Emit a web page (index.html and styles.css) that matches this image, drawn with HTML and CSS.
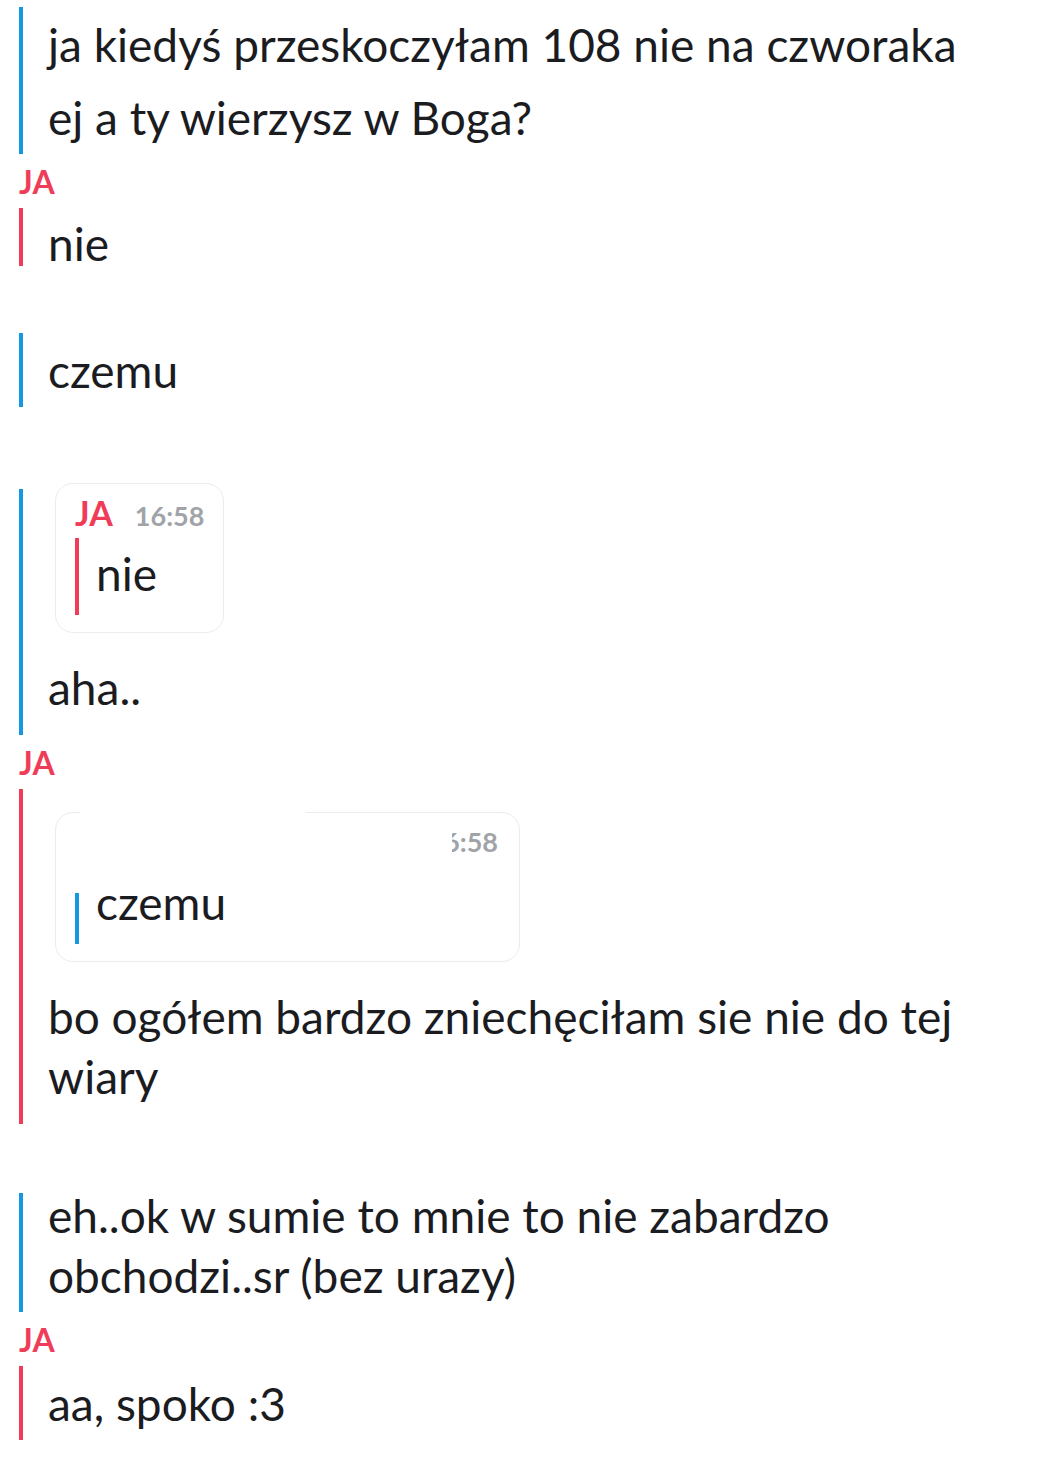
FILE: index.html
```html
<!DOCTYPE html>
<html lang="pl">
<head>
<meta charset="utf-8">
<title>Czat</title>
<link rel="stylesheet" href="styles.css">
</head>
<body>
<div class="chat">
  <div class="msg blue b1">
    <p class="t">ja kiedyś przeskoczyłam 108 nie na czworaka</p>
    <p class="t">ej a ty wierzysz w Boga?</p>
  </div>
  <div class="name">JA</div>
  <div class="msg red b2"><p class="t">nie</p></div>
  <div class="msg blue b3"><p class="t">czemu</p></div>
  <div class="msg blue b4 after-quote">
    <div class="quote">
      <div class="qhead"><span class="qname">JA</span><span class="qtime">16:58</span></div>
      <div class="qbody red"><p class="t">nie</p></div>
    </div>
    <p class="t">aha..</p>
  </div>
  <div class="name">JA</div>
  <div class="msg red b5 after-quote">
    <div class="quote wide">
      <div class="qhead right"><span class="qtime"><span class="clip">6</span>:58</span></div>
      <div class="qbody blue censored"><p class="t">czemu</p></div>
      <div class="mask"></div>
    </div>
    <p class="t">bo ogółem bardzo zniechęciłam sie nie do tej wiary</p>
  </div>
  <div class="msg blue b6">
    <p class="t">eh..ok w sumie to mnie to nie zabardzo obchodzi..sr (bez urazy)</p>
  </div>
  <div class="name">JA</div>
  <div class="msg red b7"><p class="t">aa, spoko :3</p></div>
</div>
</body>
</html>
```
FILE: styles.css
```css
* {
  box-sizing: border-box;
  margin: 0;
  padding: 0;
}

html, body {
  background: #ffffff;
}

body {
  width: 1060px;
  height: 1463px;
  overflow: hidden;
  font-family: Lato, "Open Sans", "Liberation Sans", sans-serif;
  color: #1b1c1f;
}

.chat {
  display: flex;
  flex-direction: column;
  padding: 0 24px 0 19px;
}

.msg {
  display: flex;
  flex-direction: column;
  align-items: flex-start;
  border-left: 4px solid #1598e2;
  padding: 8px 0 6px 25px;
}

.msg.blue { border-left-color: #1598e2; }
.msg.red { border-left-color: #ef3c58; }

.t {
  font-size: 46px;
  line-height: 60px;
  font-weight: 400;
}

.t + .t { margin-top: 13px; }

.name {
  font-size: 32px;
  line-height: 30px;
  font-weight: 700;
  color: #ef3c58;
  margin: 13px 0 11px;
}

.b1 { margin-top: 7px; }
.b2 { padding-top: 6px; height: 58px; }
.b3 { margin-top: 67px; }
.b4 { margin-top: 82px; padding-top: 0; }
.b4 .quote { margin-top: -6px; }
.b5 { padding-top: 23px; }
.after-quote { padding-bottom: 17px; }
.after-quote > .t { margin-top: 25px; }
.b6 { margin-top: 69px; padding-top: 0; }
.b6 > .t:first-child { margin-top: -7px; }

.quote {
  position: relative;
  width: fit-content;
  margin-left: 7px;
  border: 1px solid #ececec;
  border-radius: 18px;
  padding: 14px 19px 17px;
}

.quote.wide { width: 465px; }

.qhead {
  display: flex;
  align-items: baseline;
  line-height: 30px;
  height: 30px;
}

.qhead.right {
  justify-content: flex-end;
  padding-right: 2px;
}

.qname {
  font-size: 34px;
  font-weight: 700;
  color: #ef3c58;
}

.qtime {
  font-size: 27px;
  font-weight: 700;
  color: #a0a3a8;
  margin-left: 22px;
}

.clip {
  display: inline-block;
  vertical-align: top;
  width: 8px;
  height: 30px;
  overflow: hidden;
  direction: rtl;
  white-space: nowrap;
}

.qbody {
  margin-top: 10px;
  border-left: 4px solid #ef3c58;
  padding: 6px 0 11px 17px;
}

.qbody.red { border-left-color: #ef3c58; }

.qbody.censored {
  border-left: none;
  padding-left: 21px;
  background: linear-gradient(#1598e2, #1598e2) left bottom / 4px 51px no-repeat;
}

.mask {
  position: absolute;
  left: 24px;
  top: -2px;
  width: 226px;
  height: 4px;
  background: #ffffff;
}
```
